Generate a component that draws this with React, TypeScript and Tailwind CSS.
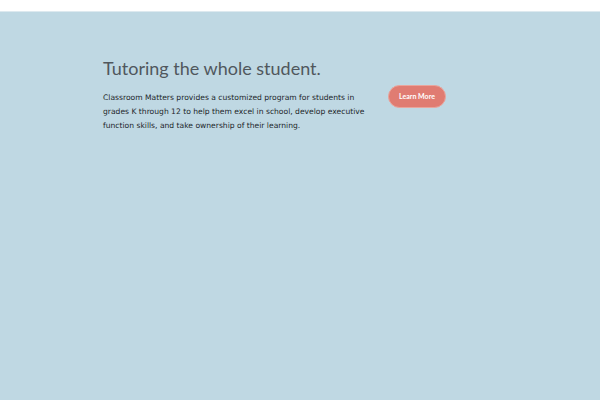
export default function App() {
  return (
    <div className="flex h-[400px] w-[600px] flex-col overflow-hidden bg-[#bfd8e3]">
      <div className="h-[11px] bg-white" />
      <div className="h-[1px] bg-[#dde9ef]" />
      <div className="flex items-start pl-[103px] pt-[45px]">
        <div className="w-[272px]">
          <h1 className="font-['Lato',sans-serif] text-[18px] leading-[22px] text-[#50575d]">
            Tutoring the whole student.
          </h1>
          <p className="mt-[12px] font-['DejaVu_Sans',sans-serif] text-[7.6px] leading-[14px] text-[#22272b]">
            Classroom Matters provides a customized program for students in grades K through 12 to help them excel in school, develop executive function skills, and take ownership of their learning.
          </p>
        </div>
        <button className="ml-[13px] mt-[28px] h-[23px] w-[58px] rounded-full border border-[#eaa59c] bg-[#e07c72] font-['Lato',sans-serif] text-[7px] font-bold text-white">
          Learn More
        </button>
      </div>
    </div>
  );
}
